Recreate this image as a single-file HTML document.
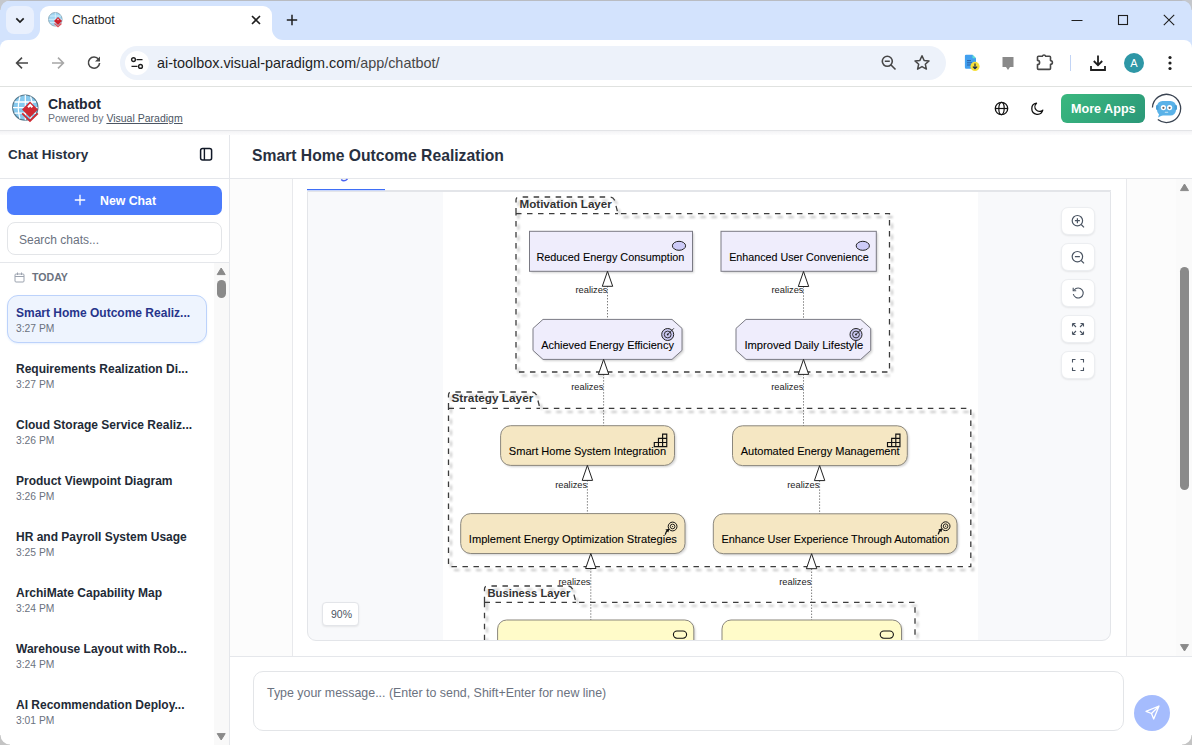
<!DOCTYPE html>
<html><head><meta charset="utf-8">
<style>
*{box-sizing:border-box;margin:0;padding:0}
html,body{width:1192px;height:745px;overflow:hidden;background:#fff;font-family:"Liberation Sans",sans-serif;color:#1f2937}
.a{position:absolute}
svg{display:block;position:absolute}
.t{position:absolute;white-space:nowrap;line-height:1}
.it{position:absolute;left:16px;white-space:nowrap;line-height:1;font-size:12px;font-weight:bold;color:#222a36}
.tm{position:absolute;left:16px;white-space:nowrap;line-height:1;font-size:10.3px;color:#6b7280}
.zb{position:absolute;left:1061px;width:34px;height:28px;border-radius:7px;background:#fff;border:1px solid #eceef1;box-shadow:0 1px 2px rgba(0,0,0,.08)}
</style></head><body>
<!-- ============ TAB STRIP ============ -->
<div class="a" style="left:0;top:0;width:1192px;height:48px;background:#d3e3fd"></div>
<div class="a" style="left:40px;top:6px;width:232px;height:36px;background:#fff;border-radius:9px 9px 0 0"></div>
<div class="a" style="left:29px;top:29px;width:11px;height:11px;background:#fff"></div>
<div class="a" style="left:29px;top:29px;width:11px;height:11px;background:#d3e3fd;border-bottom-right-radius:11px"></div>
<div class="a" style="left:272px;top:29px;width:11px;height:11px;background:#fff"></div>
<div class="a" style="left:272px;top:29px;width:11px;height:11px;background:#d3e3fd;border-bottom-left-radius:11px"></div>
<div class="a" style="left:6px;top:6px;width:28px;height:28px;border-radius:8px;background:#e9f0fd"></div>
<svg style="left:13px;top:13px" width="14" height="14" viewBox="0 0 14 14"><path d="M3.3 5.3 L7 9 L10.7 5.3" fill="none" stroke="#1f1f1f" stroke-width="1.7"/></svg>
<!-- favicon -->
<svg style="left:47px;top:11px" width="17" height="17" viewBox="0 0 17 17">
  <circle cx="8.3" cy="8.3" r="6.8" fill="#9fd6f3" stroke="#8aa6b5" stroke-width="0.9"/>
  <path d="M1.6 8.3 H15 M8.3 1.5 V15 M2.8 5 H13.8 M2.8 11.6 H13.8" stroke="#e8f6fd" stroke-width="0.7"/>
  <path d="M7 10 L11 6 L15 10 L11 14 Z" fill="#d0202c"/>
  <path d="M10.2 8.3 L11 7.5 L11.8 8.3 L11 9.4 Z" fill="#fff"/>
  <path d="M7.5 12.5 L11 15.7 L14.5 12.5" fill="none" stroke="#e0505a" stroke-width="1.2"/>
</svg>
<div class="t" style="left:72px;top:14px;font-size:12.2px;color:#1f1f1f">Chatbot</div>
<svg style="left:250px;top:14px" width="12" height="12" viewBox="0 0 12 12"><path d="M2 2 L10 10 M10 2 L2 10" stroke="#1f1f1f" stroke-width="1.6"/></svg>
<svg style="left:285px;top:13px" width="14" height="14" viewBox="0 0 14 14"><path d="M7 1.8 V12.2 M1.8 7 H12.2" stroke="#1f1f1f" stroke-width="1.5"/></svg>
<svg style="left:1071px;top:14px" width="12" height="12" viewBox="0 0 12 12"><path d="M0.5 6.5 H11.5" stroke="#1f1f1f" stroke-width="1"/></svg>
<svg style="left:1117px;top:14px" width="12" height="12" viewBox="0 0 12 12"><rect x="1.5" y="1.5" width="9" height="9" fill="none" stroke="#1f1f1f" stroke-width="1.1"/></svg>
<svg style="left:1163px;top:14px" width="12" height="12" viewBox="0 0 12 12"><path d="M0.8 0.8 L11.2 11.2 M11.2 0.8 L0.8 11.2" stroke="#1f1f1f" stroke-width="1.1"/></svg>

<!-- ============ TOOLBAR ============ -->
<div class="a" style="left:0;top:40px;width:1192px;height:47px;background:#fff;border-bottom:1px solid #e0e2e0;border-radius:8px 8px 0 0"></div>
<svg style="left:14px;top:55px" width="16" height="16" viewBox="0 0 16 16"><path d="M14 8 H3 M8 2.6 L2.6 8 L8 13.4" fill="none" stroke="#474747" stroke-width="1.6"/></svg>
<svg style="left:50px;top:55px" width="16" height="16" viewBox="0 0 16 16"><path d="M2 8 H13 M8 2.6 L13.4 8 L8 13.4" fill="none" stroke="#a7a7a7" stroke-width="1.6"/></svg>
<svg style="left:86px;top:55px" width="16" height="16" viewBox="0 0 16 16"><path d="M12.6 4.4 A5.6 5.6 0 1 0 13.6 8" fill="none" stroke="#474747" stroke-width="1.6"/><path d="M14 1.6 V6.6 H9 Z" fill="#474747"/></svg>
<div class="a" style="left:120px;top:46px;width:826px;height:34px;border-radius:17px;background:#edf2fa"></div>
<div class="a" style="left:125px;top:51px;width:24px;height:24px;border-radius:12px;background:#fff"></div>
<svg style="left:129px;top:55px" width="16" height="16" viewBox="0 0 16 16"><circle cx="4.5" cy="4.6" r="1.9" fill="none" stroke="#1f1f1f" stroke-width="1.4"/><path d="M7.5 4.6 H13.5 M2.5 11.4 H8.5" stroke="#1f1f1f" stroke-width="1.4"/><circle cx="11.5" cy="11.4" r="1.9" fill="none" stroke="#1f1f1f" stroke-width="1.4"/></svg>
<div class="t" style="left:157px;top:56px;font-size:14.4px;color:#1f1f1f">ai-toolbox.visual-paradigm.com<span style="color:#474747">/app/chatbot/</span></div>
<svg style="left:880px;top:54px" width="18" height="18" viewBox="0 0 18 18"><circle cx="7.3" cy="7.3" r="5" fill="none" stroke="#474747" stroke-width="1.6"/><path d="M10.8 10.8 L15.5 15.5 M4.8 7.3 H9.8" stroke="#474747" stroke-width="1.6"/></svg>
<svg style="left:913px;top:54px" width="18" height="18" viewBox="0 0 18 18"><path d="M9 1.8 L11.1 6.4 L16 6.9 L12.3 10.2 L13.4 15.1 L9 12.6 L4.6 15.1 L5.7 10.2 L2 6.9 L6.9 6.4 Z" fill="none" stroke="#474747" stroke-width="1.5" stroke-linejoin="round"/></svg>
<!-- extension icons -->
<svg style="left:962px;top:52px" width="22" height="22" viewBox="0 0 22 22"><path d="M4.2 2.7 H10.5 L14 6.2 V15.5 A1.3 1.3 0 0 1 12.7 16.8 H4.2 A1.3 1.3 0 0 1 2.9 15.5 V4 A1.3 1.3 0 0 1 4.2 2.7 Z" fill="#42a0ef"/><path d="M10.5 2.7 L14 6.2 H10.5 Z" fill="#5fe0d0"/><path d="M5 8.6 H9 M5 10.8 H10 M5 13 H9" stroke="#2a5fa8" stroke-width="1"/><circle cx="13" cy="14.4" r="4.6" fill="#f7e03c"/><path d="M13 11.6 V16.6 M10.9 14.6 L13 16.7 L15.1 14.6" fill="none" stroke="#1b2a4a" stroke-width="1.2"/></svg>
<svg style="left:999px;top:53px" width="18" height="20" viewBox="0 0 18 20"><path d="M3.5 4 H14.5 V14 H11 L9 17 L7 14 H3.5 Z" fill="#8a8a8a"/></svg>
<svg style="left:1034px;top:52px" width="22" height="20" viewBox="0 0 22 20"><path d="M4.5 4.2 H8.3 A1.8 1.8 0 0 1 11.7 4.2 H15.5 A1 1 0 0 1 16.5 5.2 V8.6 A1.8 1.8 0 0 1 16.5 12.4 V16.4 A1 1 0 0 1 15.5 17.4 H4.5 A1 1 0 0 1 3.5 16.4 V12.6 A2 2 0 0 0 3.5 8.4 V5.2 A1 1 0 0 1 4.5 4.2 Z" fill="none" stroke="#474747" stroke-width="1.6" stroke-linejoin="round"/></svg>
<div class="a" style="left:1070px;top:55px;width:1px;height:16px;background:#c2d4f5"></div>
<svg style="left:1088px;top:53px" width="20" height="20" viewBox="0 0 20 20"><path d="M10 2.5 V12 M5.8 8 L10 12.2 L14.2 8 M3 13 V17 H17 V13" fill="none" stroke="#1f1f1f" stroke-width="1.8"/></svg>
<div class="a" style="left:1124px;top:53px;width:20px;height:20px;border-radius:10px;background:#2e97a6;color:#fff;font-size:11px;text-align:center;line-height:20px">A</div>
<svg style="left:1162px;top:54px" width="16" height="18" viewBox="0 0 16 18"><circle cx="8" cy="3.5" r="1.6" fill="#1f1f1f"/><circle cx="8" cy="9" r="1.6" fill="#1f1f1f"/><circle cx="8" cy="14.5" r="1.6" fill="#1f1f1f"/></svg>

<!-- ============ APP HEADER ============ -->
<div class="a" style="left:0;top:87px;width:1192px;height:43px;background:#fff;z-index:2"></div>
<div class="a" style="left:0;top:130px;width:1192px;height:1px;background:#e3e4e7;z-index:2"></div>
<div class="a" style="left:0;top:131px;width:1192px;height:4px;background:linear-gradient(#f3f3f5,#fcfcfd);z-index:2"></div>
<svg style="left:11px;top:93px;z-index:3" width="30" height="30" viewBox="0 0 30 30">
  <circle cx="14.3" cy="14.6" r="12.6" fill="#86c9ee" stroke="#56778a" stroke-width="1.2"/>
  <path d="M2 14.6 H26.6 M3.5 9 H25 M3.5 20.2 H25" stroke="#fff" stroke-width="1.3"/>
  <path d="M14.3 2 V27.2 M9 3.5 Q5.5 14.6 9 25.7 M19.6 3.5 Q23.1 14.6 19.6 25.7" fill="none" stroke="#fff" stroke-width="1.2"/>
  <path d="M19 8.5 L27 16.5 L19 24.5 L11 16.5 Z" fill="#cf2a33"/>
  <path d="M16.3 13.5 L19.2 10.6 L22.1 13.5 L20.6 15 L19.2 13.6 L17.8 15 Z" fill="#fff"/>
  <path d="M11.2 20.3 L19 28 L26.8 20.3" fill="none" stroke="#cf2a33" stroke-width="1.8"/>
</svg>
<div class="t" style="left:48px;top:97px;font-size:14px;font-weight:bold;color:#1f2937;z-index:3">Chatbot</div>
<div class="t" style="left:48px;top:113px;font-size:10.5px;color:#6b7280;z-index:3">Powered by <span style="text-decoration:underline;color:#4b5563">Visual Paradigm</span></div>
<svg style="left:994px;top:101px;z-index:3" width="15" height="15" viewBox="0 0 15 15"><circle cx="7.5" cy="7.5" r="6.2" fill="none" stroke="#111" stroke-width="1.3"/><ellipse cx="7.5" cy="7.5" rx="2.7" ry="6.2" fill="none" stroke="#111" stroke-width="1.2"/><path d="M1.3 7.5 H13.7" stroke="#111" stroke-width="1.2"/></svg>
<svg style="left:1030px;top:102px;z-index:3" width="14" height="14" viewBox="0 0 14 14"><path d="M6.5 1.2 A5.6 5.6 0 1 0 12.8 8.2 A4.3 4.3 0 0 1 6.5 1.2 Z" fill="none" stroke="#111" stroke-width="1.3" stroke-linejoin="round"/></svg>
<div class="a" style="left:1061px;top:94px;width:84px;height:29px;border-radius:6px;background:linear-gradient(135deg,#3ab87f,#2b9878);z-index:3"></div>
<div class="t" style="left:1071px;top:103px;font-size:12.6px;font-weight:bold;color:#fff;z-index:3">More Apps</div>
<svg style="left:1151px;top:93px;z-index:3" width="31" height="31" viewBox="0 0 31 31">
  <path d="M1.43 14.42 A14.1 14.1 0 1 1 6.82 26.51" fill="none" stroke="#3a4452" stroke-width="1.3"/>
  <rect x="6" y="8" width="19" height="14.5" rx="5.5" fill="#5ab2e8"/>
  <path d="M8.5 20 L7 24.5 L13 21.5 Z" fill="#5ab2e8"/>
  <rect x="5" y="12" width="2.5" height="5" rx="1.2" fill="#4a9fd6"/>
  <rect x="23.5" y="12" width="2.5" height="5" rx="1.2" fill="#4a9fd6"/>
  <circle cx="12.4" cy="14.6" r="2.6" fill="#fff"/>
  <circle cx="18.6" cy="14.6" r="2.6" fill="#fff"/>
  <circle cx="12.4" cy="14.8" r="1.1" fill="#666"/>
  <circle cx="18.6" cy="14.8" r="1.1" fill="#666"/>
  <path d="M14.3 19.3 H16.7" stroke="#c9e8f8" stroke-width="1.1" stroke-linecap="round"/>
</svg>

<!-- ============ SIDEBAR ============ -->
<div class="a" style="left:229px;top:130px;width:1px;height:615px;background:#e5e7eb"></div>
<div class="t" style="left:8px;top:148px;font-size:13.5px;font-weight:bold;color:#283040">Chat History</div>
<svg style="left:199px;top:147px" width="14" height="14" viewBox="0 0 14 14"><rect x="1.6" y="1.6" width="11" height="11.4" rx="2" fill="none" stroke="#111827" stroke-width="1.5"/><path d="M5.4 1.6 V13" stroke="#111827" stroke-width="1.4"/></svg>
<div class="a" style="left:0;top:178px;width:229px;height:1px;background:#e5e7eb"></div>
<div class="a" style="left:7px;top:186px;width:215px;height:29px;border-radius:7px;background:#4b7bfc"></div>
<svg style="left:74px;top:194px" width="12" height="12" viewBox="0 0 12 12"><path d="M6 0.8 V11.2 M0.8 6 H11.2" stroke="#fff" stroke-width="1.3"/></svg>
<div class="t" style="left:100px;top:195px;font-size:12.3px;font-weight:bold;color:#fff">New Chat</div>
<div class="a" style="left:7px;top:222px;width:215px;height:33px;border-radius:8px;border:1px solid #e3e5e8;background:#fff"></div>
<div class="t" style="left:19px;top:234px;font-size:12px;color:#6b7280">Search chats...</div>
<div class="a" style="left:0;top:262px;width:229px;height:1px;background:#e5e7eb"></div>
<!-- sidebar scrollbar -->
<div class="a" style="left:214px;top:263px;width:15px;height:482px;background:#f9f9f9"></div>
<svg style="left:216px;top:266px" width="11" height="10" viewBox="0 0 11 10"><path d="M1.2 8.6 L5.2 2 L9.2 8.6 Z" fill="#8a8a8a" stroke="#8a8a8a" stroke-width="1" stroke-linejoin="round"/></svg>
<div class="a" style="left:217px;top:280px;width:9px;height:18px;border-radius:4.5px;background:#8a8a8a"></div>
<svg style="left:216px;top:732px" width="11" height="10" viewBox="0 0 11 10"><path d="M1.2 1.6 L5.2 8 L9.2 1.6 Z" fill="#8a8a8a" stroke="#8a8a8a" stroke-width="1" stroke-linejoin="round"/></svg>
<svg style="left:14px;top:272px" width="11" height="11" viewBox="0 0 11 11"><rect x="1" y="2" width="9" height="8" rx="1" fill="none" stroke="#9ca3af" stroke-width="1"/><path d="M1 4.5 H10 M3.5 0.5 V3 M7.5 0.5 V3" stroke="#9ca3af" stroke-width="1"/></svg>
<div class="t" style="left:32px;top:272px;font-size:10.6px;font-weight:bold;color:#6b7280">TODAY</div>
<!-- active item -->
<div class="a" style="left:7px;top:295px;width:200px;height:48px;border-radius:11px;background:#eef4fe;border:1px solid #bcd2fb;box-shadow:0 1px 2px rgba(59,130,246,.12)"></div>
<div class="it" style="top:307px;color:#27348b">Smart Home Outcome Realiz...</div>
<div class="tm" style="top:324px">3:27 PM</div>
<div class="it" style="top:363px">Requirements Realization Di...</div>
<div class="tm" style="top:380px">3:27 PM</div>
<div class="it" style="top:419px">Cloud Storage Service Realiz...</div>
<div class="tm" style="top:436px">3:26 PM</div>
<div class="it" style="top:475px">Product Viewpoint Diagram</div>
<div class="tm" style="top:492px">3:26 PM</div>
<div class="it" style="top:531px">HR and Payroll System Usage</div>
<div class="tm" style="top:548px">3:25 PM</div>
<div class="it" style="top:587px">ArchiMate Capability Map</div>
<div class="tm" style="top:604px">3:24 PM</div>
<div class="it" style="top:643px">Warehouse Layout with Rob...</div>
<div class="tm" style="top:660px">3:24 PM</div>
<div class="it" style="top:699px">AI Recommendation Deploy...</div>
<div class="tm" style="top:716px">3:01 PM</div>

<!-- ============ MAIN ============ -->
<div class="t" style="left:252px;top:148px;font-size:15.7px;font-weight:bold;color:#283040">Smart Home Outcome Realization</div>
<div class="a" style="left:230px;top:178px;width:962px;height:1px;background:#e5e7eb"></div>
<!-- content scroll area -->
<div class="a" style="left:230px;top:179px;width:62px;height:477px;background:#fcfcfc"></div>
<div class="a" style="left:292px;top:179px;width:1px;height:477px;background:#e8e9ec"></div>
<div class="a" style="left:1126px;top:179px;width:1px;height:477px;background:#e8e9ec"></div>
<div class="a" style="left:1127px;top:179px;width:65px;height:477px;background:#fcfcfc"></div>
<div class="a" style="left:1176px;top:179px;width:16px;height:477px;background:#fafafa"></div>
<svg style="left:1179px;top:182px" width="11" height="10" viewBox="0 0 11 10"><path d="M1.5 8.6 L5.5 2 L9.5 8.6 Z" fill="#8a8a8a" stroke="#8a8a8a" stroke-width="1" stroke-linejoin="round"/></svg>
<div class="a" style="left:1180px;top:267px;width:9px;height:223px;border-radius:4.5px;background:#8a8a8a"></div>
<svg style="left:1179px;top:643px" width="11" height="10" viewBox="0 0 11 10"><path d="M1.5 1.6 L5.5 8 L9.5 1.6 Z" fill="#8a8a8a" stroke="#8a8a8a" stroke-width="1" stroke-linejoin="round"/></svg>
<!-- tab underline -->
<div class="a" style="left:307px;top:189px;width:78px;height:1px;background:#3f6ff6"></div>
<div class="a" style="left:307px;top:190px;width:78px;height:1px;background:#c9d6fb"></div>
<div class="a" style="left:385px;top:190px;width:726px;height:1px;background:#e3e5e9"></div>
<svg style="left:340px;top:178px" width="9" height="5" viewBox="0 0 9 5"><path d="M1.2 1.5 Q4 4.3 7.5 1" fill="none" stroke="#4a63f0" stroke-width="1.5"/></svg>
<!-- card -->
<div class="a" style="left:307px;top:191px;width:804px;height:450px;background:#f8f9fb;border:1px solid #e3e5e9;border-top:1px solid #e3e5e9;border-radius:0 0 9px 9px;overflow:hidden">
  <div class="a" style="left:135px;top:0;width:535px;height:450px;background:#fff"></div>
</div>
<!-- zoom buttons -->
<div class="zb" style="top:207px"></div>
<div class="zb" style="top:243px"></div>
<div class="zb" style="top:279px"></div>
<div class="zb" style="top:315px"></div>
<div class="zb" style="top:351px"></div>
<svg style="left:1070px;top:213px" width="16" height="16" viewBox="0 0 16 16"><circle cx="7.4" cy="7.7" r="5.2" fill="none" stroke="#4b5563" stroke-width="1.2"/><path d="M11.2 11.5 L14 14.3 M4.9 7.7 H9.9 M7.4 5.2 V10.2" stroke="#4b5563" stroke-width="1.2"/></svg>
<svg style="left:1070px;top:249px" width="16" height="16" viewBox="0 0 16 16"><circle cx="7.4" cy="7.7" r="5.2" fill="none" stroke="#4b5563" stroke-width="1.2"/><path d="M11.2 11.5 L14 14.3 M4.9 7.7 H9.9" stroke="#4b5563" stroke-width="1.2"/></svg>
<svg style="left:1071px;top:286px" width="14" height="14" viewBox="0 0 14 14"><path d="M3.2 4 A5 5 0 1 1 2.3 8" fill="none" stroke="#4b5563" stroke-width="1.1"/><path d="M2.2 1.8 V4.8 H5.2" fill="none" stroke="#4b5563" stroke-width="1.1"/></svg>
<svg style="left:1071px;top:322px" width="14" height="14" viewBox="0 0 14 14"><path d="M1.5 1.5 L5 5 M1.5 1.5 H4.5 M1.5 1.5 V4.5 M12.5 1.5 L9 5 M12.5 1.5 H9.5 M12.5 1.5 V4.5 M1.5 12.5 L5 9 M1.5 12.5 H4.5 M1.5 12.5 V9.5 M12.5 12.5 L9 9 M12.5 12.5 H9.5 M12.5 12.5 V9.5" fill="none" stroke="#4b5563" stroke-width="1.1"/></svg>
<svg style="left:1071px;top:358px" width="14" height="14" viewBox="0 0 14 14"><path d="M1.5 4.5 V1.5 H4.5 M9.5 1.5 H12.5 V4.5 M12.5 9.5 V12.5 H9.5 M4.5 12.5 H1.5 V9.5" fill="none" stroke="#4b5563" stroke-width="1.1"/></svg>
<!-- 90% badge -->
<div class="a" style="left:322px;top:602px;width:37px;height:24px;border-radius:4px;background:#fff;border:1px solid #e3e5e9;box-shadow:0 1px 2px rgba(0,0,0,.08)"></div>
<div class="t" style="left:331px;top:609px;font-size:10.5px;color:#4b5563">90%</div>

<!-- DIAGRAM -->
<svg id="diag" style="left:443px;top:192px" width="535" height="448" viewBox="443 192 535 448">
<defs><filter id="sh" x="-5%" y="-5%" width="115%" height="115%"><feGaussianBlur stdDeviation="1.3"/></filter><filter id="bs" x="-5%" y="-5%" width="115%" height="125%"><feGaussianBlur stdDeviation="0.8"/></filter></defs>
<g transform="translate(2.5 3.5)" filter="url(#sh)" opacity="0.55"><path d="M516 213.6 V200 Q516 197 519 197 H610 Q613 197 614.5 200 L618 213.6 H889.5 V372 H516 Z" fill="none" stroke="#888" stroke-width="1.6" stroke-dasharray="5.5 5.5"/></g>
<path d="M516 213.6 H618" fill="none" stroke="#3c3c3c" stroke-width="1.3" stroke-dasharray="5.5 5.5"/>
<path d="M516 213.6 V200 Q516 197 519 197 H610 Q613 197 614.5 200 L618 213.6 H889.5 V372 H516 Z" fill="none" stroke="#3c3c3c" stroke-width="1.3" stroke-dasharray="5.5 5.5"/>
<text x="519.5" y="208" font-size="11" font-weight="bold" fill="#333" textLength="92.3" lengthAdjust="spacingAndGlyphs">Motivation Layer</text>
<g transform="translate(2.5 3.5)" filter="url(#sh)" opacity="0.55"><path d="M448.5 408.4 V395 Q448.5 392 451.5 392 H532 Q535 392 536.5 395 L540 408.4 H970.8 V566.6 H448.5 Z" fill="none" stroke="#888" stroke-width="1.6" stroke-dasharray="5.5 5.5"/></g>
<path d="M448.5 408.4 H540" fill="none" stroke="#3c3c3c" stroke-width="1.3" stroke-dasharray="5.5 5.5"/>
<path d="M448.5 408.4 V395 Q448.5 392 451.5 392 H532 Q535 392 536.5 395 L540 408.4 H970.8 V566.6 H448.5 Z" fill="none" stroke="#3c3c3c" stroke-width="1.3" stroke-dasharray="5.5 5.5"/>
<text x="451.5" y="402.3" font-size="11" font-weight="bold" fill="#333" textLength="81.8" lengthAdjust="spacingAndGlyphs">Strategy Layer</text>
<g transform="translate(2.5 3.5)" filter="url(#sh)" opacity="0.55"><path d="M484.5 602.3 V589 Q484.5 586 487.5 586 H568 Q571 586 572.5 589 L576 602.3 H915 V700 H484.5 Z" fill="none" stroke="#888" stroke-width="1.6" stroke-dasharray="5.5 5.5"/></g>
<path d="M484.5 602.3 H576" fill="none" stroke="#3c3c3c" stroke-width="1.3" stroke-dasharray="5.5 5.5"/>
<path d="M484.5 602.3 V589 Q484.5 586 487.5 586 H568 Q571 586 572.5 589 L576 602.3 H915 V700 H484.5 Z" fill="none" stroke="#3c3c3c" stroke-width="1.3" stroke-dasharray="5.5 5.5"/>
<text x="487.5" y="597" font-size="11" font-weight="bold" fill="#333" textLength="82.8" lengthAdjust="spacingAndGlyphs">Business Layer</text>
<rect x="531.0" y="232.8" width="163.0" height="40" rx="0" fill="#000" opacity="0.18" filter="url(#bs)"/>
<rect x="529.5" y="231.3" width="163.0" height="40" fill="#efedfc" stroke="#7a7a84" stroke-width="1"/>
<text x="536.4" y="261" font-size="10.6" fill="#000" stroke="#000" stroke-width="0.08" textLength="148.0" lengthAdjust="spacingAndGlyphs">Reduced Energy Consumption</text>
<ellipse cx="679" cy="245.8" rx="6.6" ry="4.5" fill="#cdcbf8" stroke="#222" stroke-width="1"/>
<rect x="722.5" y="232.8" width="155.29999999999995" height="40" rx="0" fill="#000" opacity="0.18" filter="url(#bs)"/>
<rect x="721" y="231.3" width="155.29999999999995" height="40" fill="#efedfc" stroke="#7a7a84" stroke-width="1"/>
<text x="729.1999999999999" y="261" font-size="10.6" fill="#000" stroke="#000" stroke-width="0.08" textLength="139.5" lengthAdjust="spacingAndGlyphs">Enhanced User Convenience</text>
<ellipse cx="862.8" cy="245.8" rx="6.6" ry="4.5" fill="#cdcbf8" stroke="#222" stroke-width="1"/>
<path d="M544.5 320.9 H673.5 L683.5 329.9 V351.9 L673.5 360.9 H544.5 L534.5 351.9 V329.9 Z" fill="#000" opacity="0.18" filter="url(#bs)"/>
<path d="M543 319.4 H672 L682 328.4 V350.4 L672 359.4 H543 L533 350.4 V328.4 Z" fill="#efedfc" stroke="#7a7a84" stroke-width="1"/>
<text x="541.1999999999999" y="348.8" font-size="10.6" fill="#000" stroke="#000" stroke-width="0.08" textLength="132.70000000000005" lengthAdjust="spacingAndGlyphs">Achieved Energy Efficiency</text>
<circle cx="667.7" cy="334.5" r="6" fill="#c9c6f0" stroke="#222" stroke-width="1"/>
<circle cx="667.7" cy="334.5" r="3.4" fill="none" stroke="#222" stroke-width="0.9"/>
<circle cx="667.7" cy="334.5" r="0.9" fill="#222"/>
<path d="M667.7 334.5 L673.9000000000001 328.3" stroke="#222" stroke-width="0.9"/>
<path d="M747.5 320.9 H862.2 L872.2 329.9 V351.9 L862.2 360.9 H747.5 L737.5 351.9 V329.9 Z" fill="#000" opacity="0.18" filter="url(#bs)"/>
<path d="M746 319.4 H860.7 L870.7 328.4 V350.4 L860.7 359.4 H746 L736 350.4 V328.4 Z" fill="#efedfc" stroke="#7a7a84" stroke-width="1"/>
<text x="744.4" y="348.8" font-size="10.6" fill="#000" stroke="#000" stroke-width="0.08" textLength="118.79999999999995" lengthAdjust="spacingAndGlyphs">Improved Daily Lifestyle</text>
<circle cx="856" cy="334.5" r="6" fill="#c9c6f0" stroke="#222" stroke-width="1"/>
<circle cx="856" cy="334.5" r="3.4" fill="none" stroke="#222" stroke-width="0.9"/>
<circle cx="856" cy="334.5" r="0.9" fill="#222"/>
<path d="M856 334.5 L862.2 328.3" stroke="#222" stroke-width="0.9"/>
<rect x="502.1" y="427.2" width="173.89999999999998" height="39.69999999999999" rx="10" fill="#000" opacity="0.18" filter="url(#bs)"/>
<rect x="500.6" y="425.7" width="173.89999999999998" height="39.69999999999999" rx="10" fill="#f5e7c3" stroke="#8b877d" stroke-width="1"/>
<text x="508.79999999999995" y="455" font-size="10.6" fill="#000" stroke="#000" stroke-width="0.08" textLength="157.30000000000007" lengthAdjust="spacingAndGlyphs">Smart Home System Integration</text>
<path d="M654.3 446.6 H666.75 V434.15000000000003 H662.5999999999999 V438.3 H658.4499999999999 V442.45000000000005 H654.3 Z M658.4499999999999 446.6 V442.45000000000005 H666.75 M662.5999999999999 446.6 V438.3 H666.75" fill="none" stroke="#111" stroke-width="1.15"/>
<rect x="734.0" y="427.3" width="174.79999999999995" height="39.80000000000001" rx="10" fill="#000" opacity="0.18" filter="url(#bs)"/>
<rect x="732.5" y="425.8" width="174.79999999999995" height="39.80000000000001" rx="10" fill="#f5e7c3" stroke="#8b877d" stroke-width="1"/>
<text x="740.6999999999999" y="455" font-size="10.6" fill="#000" stroke="#000" stroke-width="0.08" textLength="159.0" lengthAdjust="spacingAndGlyphs">Automated Energy Management</text>
<path d="M887.5 446.6 H899.95 V434.15000000000003 H895.8 V438.3 H891.65 V442.45000000000005 H887.5 Z M891.65 446.6 V442.45000000000005 H899.95 M895.8 446.6 V438.3 H899.95" fill="none" stroke="#111" stroke-width="1.15"/>
<rect x="462.2" y="515.1" width="224.3" height="39.89999999999998" rx="10" fill="#000" opacity="0.18" filter="url(#bs)"/>
<rect x="460.7" y="513.6" width="224.3" height="39.89999999999998" rx="10" fill="#f5e7c3" stroke="#8b877d" stroke-width="1"/>
<text x="468.79999999999995" y="542.8" font-size="10.6" fill="#000" stroke="#000" stroke-width="0.08" textLength="208.10000000000002" lengthAdjust="spacingAndGlyphs">Implement Energy Optimization Strategies</text>
<circle cx="672.6" cy="526.5" r="4.4" fill="none" stroke="#111" stroke-width="1"/>
<circle cx="672.6" cy="526.5" r="2.3" fill="none" stroke="#111" stroke-width="0.9"/>
<circle cx="672.6" cy="526.5" r="0.6" fill="#111"/>
<path d="M665.2 534.7 Q666.1 531.0 668.2 530.0" fill="none" stroke="#111" stroke-width="1.3"/>
<path d="M669.4 528.8 L665.4 529.5 L668.3000000000001 532.5 Z" fill="#111"/>
<rect x="714.8" y="515.3" width="243.70000000000005" height="39.90000000000009" rx="10" fill="#000" opacity="0.18" filter="url(#bs)"/>
<rect x="713.3" y="513.8" width="243.70000000000005" height="39.90000000000009" rx="10" fill="#f5e7c3" stroke="#8b877d" stroke-width="1"/>
<text x="721.5" y="542.8" font-size="10.6" fill="#000" stroke="#000" stroke-width="0.08" textLength="227.89999999999998" lengthAdjust="spacingAndGlyphs">Enhance User Experience Through Automation</text>
<circle cx="945.6" cy="526.2" r="4.4" fill="none" stroke="#111" stroke-width="1"/>
<circle cx="945.6" cy="526.2" r="2.3" fill="none" stroke="#111" stroke-width="0.9"/>
<circle cx="945.6" cy="526.2" r="0.6" fill="#111"/>
<path d="M938.2 534.4000000000001 Q939.1 530.7 941.2 529.7" fill="none" stroke="#111" stroke-width="1.3"/>
<path d="M942.4 528.5 L938.4 529.2 L941.3000000000001 532.2 Z" fill="#111"/>
<rect x="499.1" y="621.5" width="196.19999999999993" height="60" rx="9" fill="#000" opacity="0.18" filter="url(#bs)"/>
<rect x="497.6" y="620" width="196.19999999999993" height="60" rx="9" fill="#fffbc9" stroke="#8b877d" stroke-width="1"/>
<rect x="673.4" y="631" width="13.2" height="7.2" rx="3.6" fill="none" stroke="#111" stroke-width="1.1"/>
<rect x="723.5" y="621.5" width="179.5" height="60" rx="9" fill="#000" opacity="0.18" filter="url(#bs)"/>
<rect x="722" y="620" width="179.5" height="60" rx="9" fill="#fffbc9" stroke="#8b877d" stroke-width="1"/>
<rect x="880.1999999999999" y="631" width="13.2" height="7.2" rx="3.6" fill="none" stroke="#111" stroke-width="1.1"/>
<path d="M607.5 286.3 V319.4" stroke="#444" stroke-width="1" stroke-dasharray="1 2"/>
<path d="M607.5 271.3 L612.7 286.3 H602.3 Z" fill="#fff" stroke="#222" stroke-width="1"/>
<text x="607.5" y="293" font-size="9.3" fill="#1c1c1c" text-anchor="end">realizes</text>
<path d="M803.5 286.5 V319.4" stroke="#444" stroke-width="1" stroke-dasharray="1 2"/>
<path d="M803.5 271.5 L808.7 286.5 H798.3 Z" fill="#fff" stroke="#222" stroke-width="1"/>
<text x="803.5" y="293" font-size="9.3" fill="#1c1c1c" text-anchor="end">realizes</text>
<path d="M603.6 374.4 V425.7" stroke="#444" stroke-width="1" stroke-dasharray="1 2"/>
<path d="M603.6 359.4 L608.8000000000001 374.4 H598.4 Z" fill="#fff" stroke="#222" stroke-width="1"/>
<text x="603.3" y="389.6" font-size="9.3" fill="#1c1c1c" text-anchor="end">realizes</text>
<path d="M803.5 374.4 V425.8" stroke="#444" stroke-width="1" stroke-dasharray="1 2"/>
<path d="M803.5 359.4 L808.7 374.4 H798.3 Z" fill="#fff" stroke="#222" stroke-width="1"/>
<text x="803.3" y="389.6" font-size="9.3" fill="#1c1c1c" text-anchor="end">realizes</text>
<path d="M587.4 480.4 V513.6" stroke="#444" stroke-width="1" stroke-dasharray="1 2"/>
<path d="M587.4 465.4 L592.6 480.4 H582.1999999999999 Z" fill="#fff" stroke="#222" stroke-width="1"/>
<text x="587.2" y="487.8" font-size="9.3" fill="#1c1c1c" text-anchor="end">realizes</text>
<path d="M819.6 480.6 V513.8" stroke="#444" stroke-width="1" stroke-dasharray="1 2"/>
<path d="M819.6 465.6 L824.8000000000001 480.6 H814.4 Z" fill="#fff" stroke="#222" stroke-width="1"/>
<text x="819.3" y="487.8" font-size="9.3" fill="#1c1c1c" text-anchor="end">realizes</text>
<path d="M590.8 568.5 V620" stroke="#444" stroke-width="1" stroke-dasharray="1 2"/>
<path d="M590.8 553.5 L596.0 568.5 H585.5999999999999 Z" fill="#fff" stroke="#222" stroke-width="1"/>
<text x="590.5" y="584.6" font-size="9.3" fill="#1c1c1c" text-anchor="end">realizes</text>
<path d="M811.6 568.7 V620" stroke="#444" stroke-width="1" stroke-dasharray="1 2"/>
<path d="M811.6 553.7 L816.8000000000001 568.7 H806.4 Z" fill="#fff" stroke="#222" stroke-width="1"/>
<text x="811.3" y="584.6" font-size="9.3" fill="#1c1c1c" text-anchor="end">realizes</text>
</svg>

<!-- ============ INPUT AREA ============ -->
<div class="a" style="left:230px;top:656px;width:962px;height:1px;background:#e5e7eb"></div>
<div class="a" style="left:253px;top:671px;width:871px;height:60px;border-radius:10px;border:1px solid #e3e5e8;background:#fff"></div>
<div class="t" style="left:267px;top:687px;font-size:12.4px;color:#6b7280">Type your message... (Enter to send, Shift+Enter for new line)</div>
<div class="a" style="left:1134px;top:695px;width:36px;height:36px;border-radius:18px;background:#a5bcfd"></div>
<svg style="left:1144px;top:704px" width="17" height="17" viewBox="0 0 17 17"><path d="M15 2 L2 7.3 L7.5 9.5 L9.7 15 Z M15 2 L7.5 9.5" fill="none" stroke="#fff" stroke-width="1.3" stroke-linejoin="round"/></svg>
<div class="a" style="left:0;top:0;width:1192px;height:1px;background:#b9bcc2;z-index:50"></div>
<svg style="left:0;top:0;z-index:50" width="10" height="10" viewBox="0 0 10 10"><path d="M0 0 H10 V0.5 A9.5 9.5 0 0 0 0.5 10 H0 Z" fill="#c4c7cc"/></svg>
<svg style="left:1182px;top:0;z-index:50" width="10" height="10" viewBox="0 0 10 10"><path d="M10 0 H0 V0.5 A9.5 9.5 0 0 1 9.5 10 H10 Z" fill="#c4c7cc"/></svg>
<svg style="left:0;top:735px;z-index:50" width="10" height="10" viewBox="0 0 10 10"><path d="M0 10 H10 V9.5 A9.5 9.5 0 0 1 0.5 0 H0 Z" fill="#c4c4c4"/></svg>
<svg style="left:1182px;top:735px;z-index:50" width="10" height="10" viewBox="0 0 10 10"><path d="M10 10 H0 V9.5 A9.5 9.5 0 0 0 9.5 0 H10 Z" fill="#c4c4c4"/></svg>
</body></html>
